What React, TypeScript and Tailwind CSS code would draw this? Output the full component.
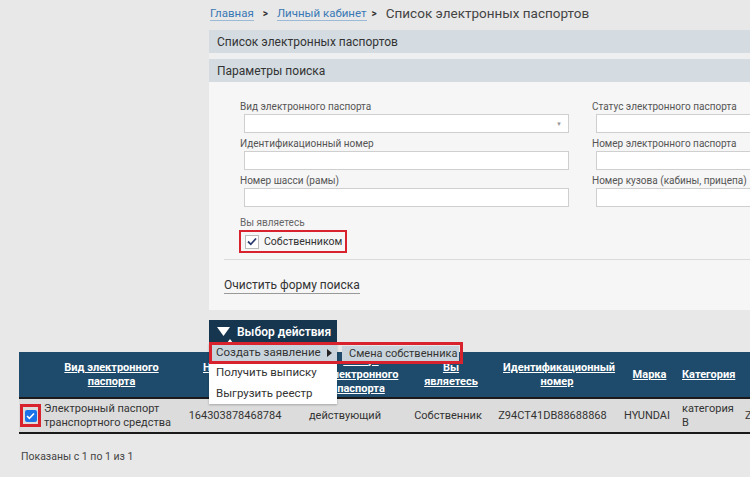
import React from 'react';

const cols = [164, 104, 116, 90, 119, 70, 58, 80];

const Field: React.FC<{ label: string; select?: boolean }> = ({ label, select }) => (
  <div className="flex flex-col">
    <span className="text-[10px] leading-[13px] text-[#555] h-[13px]">{label}</span>
    <div className="ml-[4px] mt-[1px] h-[19px] w-[325px] bg-white border border-[#cfcfcf] relative">
      {select && <span className="absolute right-[6px] top-[4px] text-[6px] text-[#999]">▼</span>}
    </div>
  </div>
);

export default function App() {
  return (
    <div
      className="w-[750px] h-[477px] overflow-hidden bg-[#e8e8e8] text-[#333]"
      style={{ fontFamily: 'Roboto, "Open Sans", sans-serif' }}
    >
      <div className="pl-[209px] w-[1000px]">
        {/* breadcrumbs */}
        <div className="h-[30px] flex items-center gap-[9px] text-[11.5px] pl-[1px] pb-[3px]">
          <span className="text-[#3a78b5] border-b border-[#9cbad6] leading-[14px]">Главная</span>
          <span className="text-[#333] text-[10px] font-bold">&gt;</span>
          <span className="text-[#3a78b5] border-b border-[#9cbad6] leading-[14px]">Личный кабинет</span>
          <span className="text-[#333] text-[10px] font-bold -ml-[4px]">&gt;</span>
          <span className="text-[#444] text-[13.5px]">Список электронных паспортов</span>
        </div>

        <div className="h-[23px] bg-[#d4dce2] flex items-center pl-[8px] text-[12px] text-[#333]">
          Список электронных паспортов
        </div>
        <div className="h-[6px] bg-[#efefef]" />
        <div className="h-[23px] bg-[#d4dce2] flex items-center pl-[8px] text-[12px] text-[#333]">
          Параметры поиска
        </div>

        {/* search form */}
        <div className="bg-[#f6f6f6] h-[228px] pt-[18px] pl-[15px]">
          <div className="pl-[16px] flex gap-[23px]">
            <div className="flex flex-col gap-[4px]">
              <Field label="Вид электронного паспорта" select />
              <Field label="Идентификационный номер" />
              <Field label="Номер шасси (рамы)" />
            </div>
            <div className="flex flex-col gap-[4px]">
              <Field label="Статус электронного паспорта" />
              <Field label="Номер электронного паспорта" />
              <Field label="Номер кузова (кабины, прицепа)" />
            </div>
          </div>

          <div className="pl-[16px] mt-[10px]">
            <div className="text-[10px] leading-[12px] text-[#666]">Вы являетесь</div>
            <div className="inline-flex items-center gap-[5px] border-2 border-[#d8232f] pl-[4px] pr-[3px] h-[23px] mt-[1px] -ml-[1px]">
              <div className="w-[14px] h-[14px] bg-white border border-[#bbb] flex items-center justify-center">
                <svg width="10" height="9" viewBox="0 0 10 9">
                  <path d="M1 4.5 L3.8 7.3 L9 1.5" fill="none" stroke="#2a3b6e" strokeWidth="1.8" />
                </svg>
              </div>
              <span className="text-[10.5px] text-[#333]">Собственником</span>
            </div>
          </div>

          <div className="h-px bg-[#dadada] mt-[6px]" />

          <div className="mt-[12px]">
            <span className="text-[12px] text-[#333] border-b border-[#999] pb-[1px]">Очистить форму поиска</span>
          </div>
        </div>

        {/* action button */}
        <div className="mt-[10px] relative w-[128px] z-10">
          <div className="h-[23px] bg-[#16364f] flex items-center gap-[7px] pl-[8px] text-white text-[12px] font-semibold relative">
            <svg width="13" height="9" viewBox="0 0 13 9">
              <path d="M0 0 H13 L6.5 9 Z" fill="#fff" />
            </svg>
            <span>Выбор действия</span>
            <svg className="absolute left-[18px] bottom-0" width="6" height="4" viewBox="0 0 6 4">
              <path d="M0 4 L3 0 L6 4 Z" fill="#fff" />
            </svg>
          </div>
          <div className="absolute left-0 top-[23px] w-[128px] bg-white shadow-[0_1px_2px_rgba(0,0,0,0.25)] text-[11.5px] text-[#333]">
            <div className="h-[20px] bg-[#c9d3db] flex items-center pl-[7px] relative">
              Создать заявление
              <svg className="absolute right-[5px] top-[6px]" width="5" height="8" viewBox="0 0 5 8">
                <path d="M0 0 L5 4 L0 8 Z" fill="#222" />
              </svg>
            </div>
            <div className="h-[20px] flex items-center pl-[7px]">Получить выписку</div>
            <div className="h-[21px] flex items-center pl-[7px]">Выгрузить реестр</div>
          </div>
          <div className="absolute left-[133px] top-[26px] w-[117px] h-[16px] bg-[#c9d3db] text-[11px] flex items-center pl-[7px] text-[#333] whitespace-nowrap">
            Смена собственника
          </div>
          <div className="absolute left-0 top-[22px] w-[254px] h-[22px] border-[3px] border-[#d8232f]" />
        </div>
      </div>

      {/* results table */}
      <div className="pl-[19px] mt-[9px]">
        <table className="table-fixed border-collapse w-[801px]">
          <colgroup>
            {cols.map((w, i) => (
              <col key={i} style={{ width: w }} />
            ))}
          </colgroup>
          <thead>
            <tr className="bg-[#1e4b6b] h-[46px] text-white text-[11px] leading-[14px] font-bold">
              <th className="px-[3px] pl-[24px]"><span className="underline">Вид электронного паспорта</span></th>
              <th className="pl-[20px] pr-0 whitespace-nowrap">
                <span className="underline">Номер электронного<br />паспорта</span>
              </th>
              <th className="px-[8px] pl-[40px]"><span className="underline">Статус электронного паспорта</span></th>
              <th className="px-[14px] pl-[20px]"><span className="underline">Вы являетесь</span></th>
              <th className="px-[1px] pl-[10px]"><span className="underline">Идентификационный номер</span></th>
              <th className="px-[1px] pl-[6px]"><span className="underline">Марка</span></th>
              <th className="px-0 text-left"><span className="underline">Категория</span></th>
              <th className="px-[1px]" />
            </tr>
          </thead>
          <tbody>
            <tr className="bg-[#dcdcdc] h-[35px] text-[11px] leading-[14px] text-[#333] border-t-2 border-b-2 border-[#1a1a1a]">
              <td className="pl-[1px] pr-[2px]">
                <div className="flex items-center gap-[3px]">
                  <div className="w-[21px] h-[23px] border-[3px] border-[#d8232f] flex items-center justify-center shrink-0">
                    <div className="w-[12px] h-[12px] rounded-[2px] bg-[#1a73e8] flex items-center justify-center">
                      <svg width="9" height="8" viewBox="0 0 9 8">
                        <path d="M1 4 L3.4 6.3 L8 1.5" fill="none" stroke="#fff" strokeWidth="1.6" />
                      </svg>
                    </div>
                  </div>
                  <span>Электронный паспорт транспортного средства</span>
                </div>
              </td>
              <td className="text-center">164303878468784</td>
              <td className="text-center">действующий</td>
              <td className="text-center">Собственник</td>
              <td className="text-center">Z94CT41DB88688868</td>
              <td className="text-center">HYUNDAI</td>
              <td className="pl-0">категория B</td>
              <td className="pl-[5px]">Z</td>
            </tr>
          </tbody>
        </table>
        <div className="mt-[15px] pl-[2px] text-[10.5px] text-[#444]">Показаны с 1 по 1 из 1</div>
      </div>
    </div>
  );
}
